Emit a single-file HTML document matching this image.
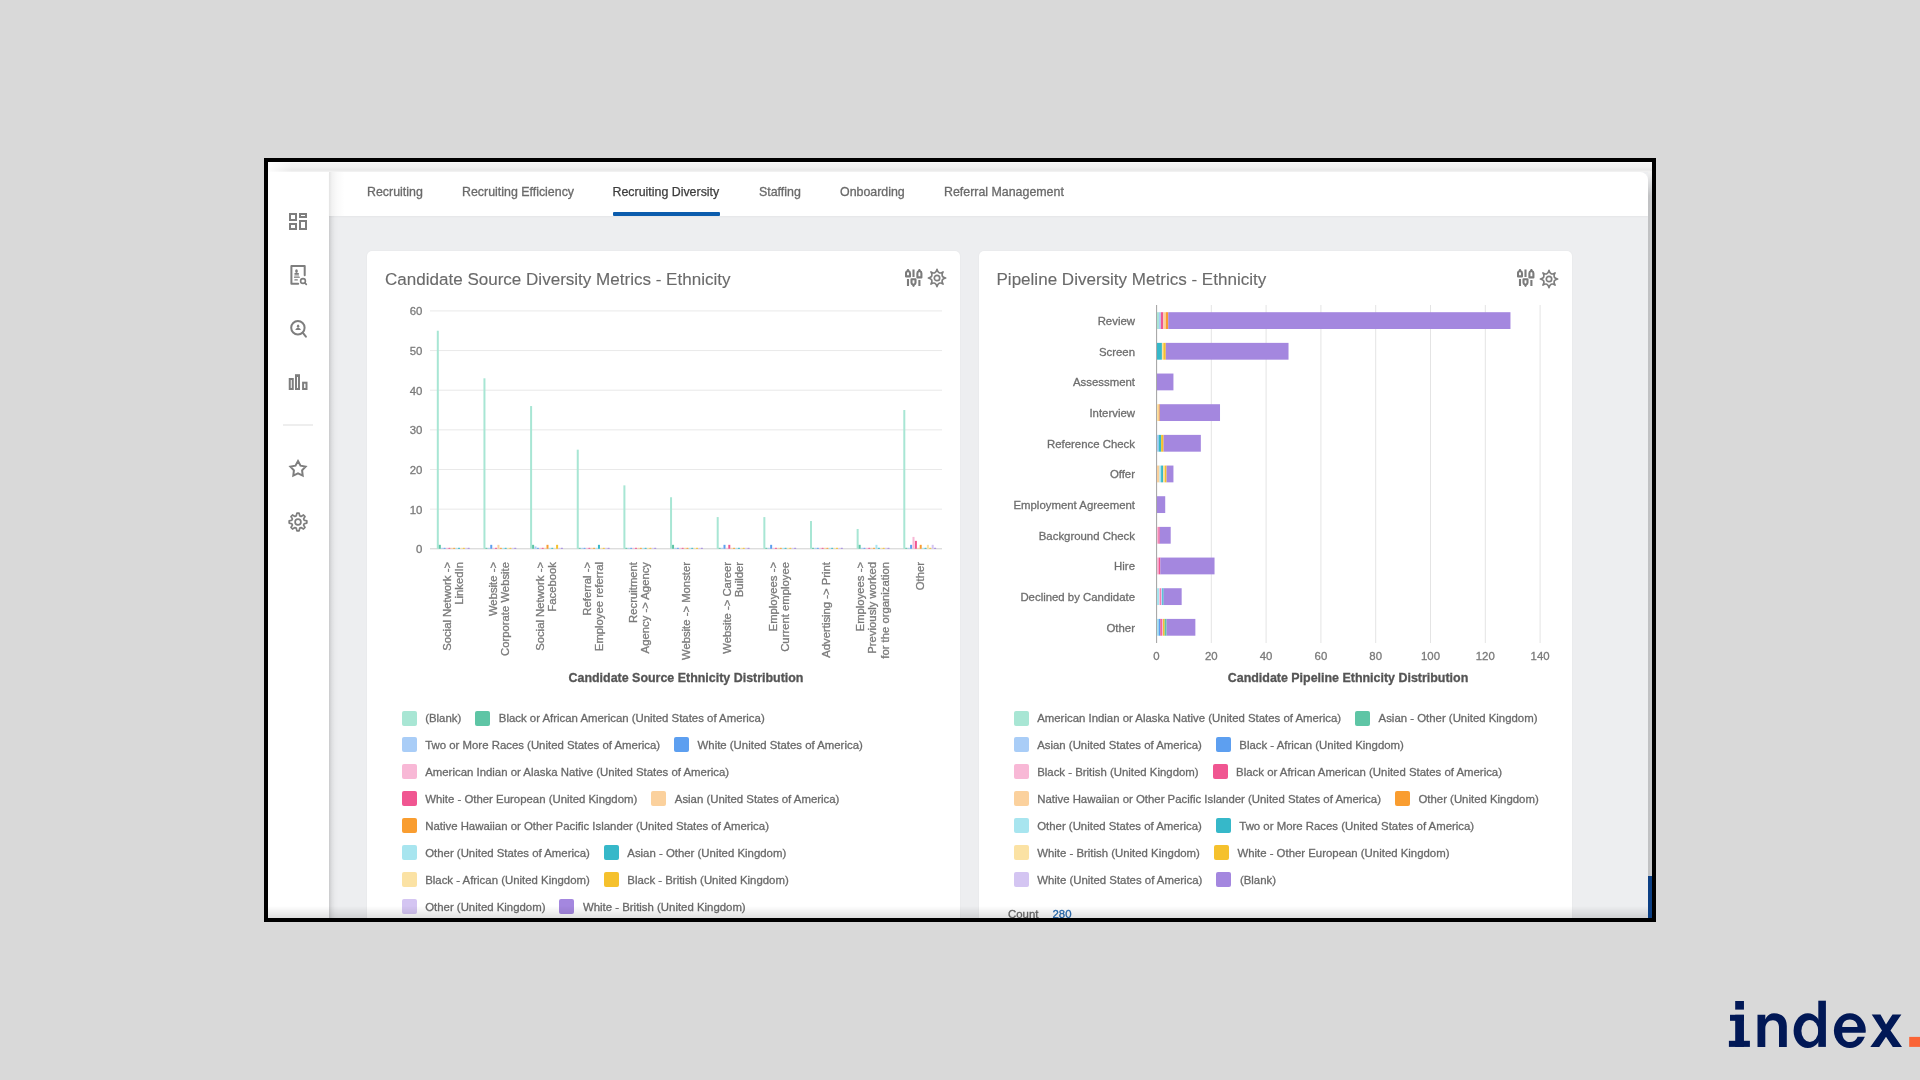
<!DOCTYPE html>
<html><head><meta charset="utf-8"><style>
html,body{margin:0;padding:0}
body{width:1920px;height:1080px;background:#d9d9d9;position:relative;overflow:hidden;font-family:"Liberation Sans", sans-serif}
#frame{position:absolute;left:264px;top:158px;width:1384px;height:756px;border:4px solid #000;background:#fff;background-clip:padding-box}
#clip{position:absolute;left:0;top:0;width:1384px;height:756px;overflow:hidden}
#pg{position:absolute;left:-268px;top:-162px;width:1920px;height:1080px;will-change:transform}
div{-webkit-text-stroke:0.3px currentColor}
.card{position:absolute;background:#fff;border-radius:5px;box-shadow:0 0 2px rgba(0,0,0,0.06)}
</style></head><body>
<div id="frame"><div id="clip"><div id="pg">
<!-- top strip -->
<div style="position:absolute;left:268px;top:162px;width:1384px;height:10px;background:linear-gradient(#ffffff 0px,#f3f3f3 1px,#f1f1f1 5px,#e8e8e8 8px,#f4f4f4 10px)"></div>
<div style="position:absolute;left:268px;top:162px;width:24px;height:12px;background:linear-gradient(90deg,rgba(255,255,255,0.9),rgba(255,255,255,0))"></div>
<!-- main grey area -->
<div style="position:absolute;left:329px;top:172px;width:1319px;height:746px;background:#edeef0"></div>
<!-- sidebar shadow on content -->
<div style="position:absolute;left:329px;top:172px;width:10px;height:746px;background:linear-gradient(90deg,rgba(0,0,0,0.15) 0px,rgba(0,0,0,0.06) 3px,rgba(0,0,0,0.015) 6px,rgba(0,0,0,0) 10px)"></div>
<!-- sidebar -->
<div style="position:absolute;left:268px;top:172px;width:61px;height:746px;background:#fff"></div>
<!-- tab bar -->
<div style="position:absolute;left:329px;top:172px;width:1319px;height:44px;background:#fff;border-top-right-radius:8px;box-shadow:0 1px 2px rgba(0,0,0,0.035)"></div>
<div style="position:absolute;left:329px;top:172px;width:16px;height:44px;background:linear-gradient(90deg,rgba(0,0,0,0.11) 0px,rgba(0,0,0,0.05) 3px,rgba(0,0,0,0.02) 8px,rgba(0,0,0,0) 16px)"></div>
<div style="position:absolute;left:367px;top:185px;line-height:14px;font-size:12.4px;white-space:nowrap;color:#6a6a6a;">Recruiting</div><div style="position:absolute;left:462px;top:185px;line-height:14px;font-size:12.4px;white-space:nowrap;color:#6a6a6a;">Recruiting Efficiency</div><div style="position:absolute;left:612.5px;top:185px;line-height:14px;font-size:12.4px;white-space:nowrap;color:#3d3d3d;-webkit-text-stroke:0.25px #3d3d3d;">Recruiting Diversity</div><div style="position:absolute;left:759px;top:185px;line-height:14px;font-size:12.4px;white-space:nowrap;color:#6a6a6a;">Staffing</div><div style="position:absolute;left:840px;top:185px;line-height:14px;font-size:12.4px;white-space:nowrap;color:#6a6a6a;">Onboarding</div><div style="position:absolute;left:944px;top:185px;line-height:14px;font-size:12.4px;white-space:nowrap;color:#6a6a6a;">Referral Management</div>
<div style="position:absolute;left:612.5px;top:211.5px;width:107.5px;height:4.5px;background:#0b5cad;border-radius:1px"></div>
<!-- scrollbar strip -->
<div style="position:absolute;left:1648px;top:172px;width:4px;height:746px;background:linear-gradient(#f2f2f2 0px,#d6d7d9 14px,#c9cacc 24px)"></div>
<div style="position:absolute;left:1648px;top:172px;width:2px;height:746px;background:linear-gradient(rgba(0,0,0,0) 14px,rgba(0,0,0,0.04) 24px)"></div>
<div style="position:absolute;left:1648px;top:876px;width:4px;height:42px;background:#0c3f84"></div>
<svg style="position:absolute;left:288px;top:212px" width="20" height="20" viewBox="0 0 20 20" fill="none" stroke="#7e7e7e" stroke-width="2">
<rect x="2" y="2" width="6" height="6"/><rect x="12" y="2" width="6" height="3"/><rect x="2" y="12" width="6" height="5"/><rect x="12" y="9" width="6" height="8"/></svg><svg style="position:absolute;left:284px;top:260px" width="28" height="30" viewBox="0 0 28 30" fill="none" stroke="#7e7e7e" stroke-width="2" stroke-linejoin="round" stroke-linecap="round">
<path d="M14.2 23.7 H7.4 V6.1 H20.7 V15.3"/>
<g fill="#7e7e7e" stroke="none"><ellipse cx="12.5" cy="11.1" rx="1.35" ry="1.9"/><rect x="10.3" y="13" width="4.7" height="1.8" rx="0.8"/><rect x="10.3" y="14.8" width="4.7" height="1.9" fill-opacity="0.45"/><rect x="10" y="16.7" width="5.8" height="1.1"/><rect x="10.3" y="19.2" width="3.6" height="1.3" rx="0.6"/></g>
<circle cx="19" cy="21" r="2.4" stroke-width="1.6"/><path d="M20.8 22.8 L22.3 24.3" stroke-width="1.7"/></svg><svg style="position:absolute;left:288px;top:318px" width="22" height="22" viewBox="0 0 22 22" fill="none" stroke="#7e7e7e" stroke-width="2" stroke-linecap="round">
<circle cx="9.9" cy="9.8" r="6.7"/><path d="M14.9 14.9 L17.9 18.6"/><ellipse cx="10.1" cy="8.2" rx="1.2" ry="1.6" fill="#7e7e7e" stroke="none"/><path d="M7.3 12.1 C7.5 10.6 8.6 10 10.1 10 C11.6 10 12.7 10.6 12.9 12.1 Z" fill="#7e7e7e" stroke="none"/></svg><svg style="position:absolute;left:285px;top:370px" width="26" height="24" viewBox="0 0 26 24" fill="none" stroke="#7e7e7e" stroke-width="2">
<rect x="4.75" y="9" width="3" height="10"/><rect x="11" y="5.2" width="3" height="13.8"/><rect x="18.1" y="12.7" width="3.4" height="6.3"/></svg><div style="position:absolute;left:283px;top:424px;width:30px;height:2px;background:#eeeeee"></div><svg style="position:absolute;left:287px;top:457px" width="22" height="22" viewBox="0 0 22 22" fill="none" stroke="#7e7e7e" stroke-width="2" stroke-linejoin="miter" stroke-miterlimit="2.5">
<path d="M11.00 4.10 L13.53 8.62 L18.61 9.63 L15.09 13.43 L15.70 18.57 L11.00 16.40 L6.30 18.57 L6.91 13.43 L3.39 9.63 L8.47 8.62 Z"/></svg><svg style="position:absolute;left:288px;top:512px" width="20" height="20" viewBox="0 0 20 20" fill="none" stroke="#7e7e7e" stroke-width="1.7" stroke-linejoin="round">
<path d="M8.24 3.85 L8.92 1.17 L11.08 1.17 L11.76 3.85 L13.10 4.40 L15.48 2.99 L17.01 4.52 L15.60 6.90 L16.15 8.24 L18.83 8.92 L18.83 11.08 L16.15 11.76 L15.60 13.10 L17.01 15.48 L15.48 17.01 L13.10 15.60 L11.76 16.15 L11.08 18.83 L8.92 18.83 L8.24 16.15 L6.90 15.60 L4.52 17.01 L2.99 15.48 L4.40 13.10 L3.85 11.76 L1.17 11.08 L1.17 8.92 L3.85 8.24 L4.40 6.90 L2.99 4.52 L4.52 2.99 L6.90 4.40 Z"/><circle cx="10" cy="10" r="2.9"/></svg>
<!-- cards -->
<div class="card" style="left:367px;top:251px;width:593px;height:700px"></div>
<div class="card" style="left:979px;top:251px;width:592.5px;height:700px"></div>
<div style="position:absolute;left:385px;top:270px;font-size:17.05px;line-height:20px;color:#6a6a6a;-webkit-text-stroke:0.12px #6a6a6a;white-space:nowrap">Candidate Source Diversity Metrics - Ethnicity</div>
<div style="position:absolute;left:996.5px;top:270px;font-size:17.05px;line-height:20px;color:#6a6a6a;-webkit-text-stroke:0.12px #6a6a6a;white-space:nowrap">Pipeline Diversity Metrics - Ethnicity</div>
<svg style="position:absolute;left:905px;top:269px" width="18" height="18" viewBox="0 0 18 18" fill="none" stroke="#7b7b7b" stroke-width="2.1" stroke-linejoin="round">
<path d="M3 10 V17 M8.5 0.5 V8 M14.4 11 V17"/>
<path d="M1 7.4 V4.2 Q1 2.6 2.4 2.3 L3 1 L3.6 2.3 Q5 2.6 5 4.2 V7.4 Z"/>
<path d="M6.5 10.3 H10.5 V13.8 Q10.5 15.2 9.1 15.6 L8.5 16.8 L7.9 15.6 Q6.5 15.2 6.5 13.8 Z"/>
<path d="M12.4 8.4 V4.2 Q12.4 2.6 13.8 2.3 L14.4 1 L15 2.3 Q16.4 2.6 16.4 4.2 V8.4 Z"/>
</svg><svg style="position:absolute;left:926.8px;top:268.4px" width="20" height="20" viewBox="0 0 20 20" fill="none" stroke="#7e7e7e" stroke-width="1.7" stroke-linejoin="round">
<path d="M10.00 1.40 Q11.26 6.95 16.08 3.92 Q13.05 8.74 18.60 10.00 Q13.05 11.26 16.08 16.08 Q11.26 13.05 10.00 18.60 Q8.74 13.05 3.92 16.08 Q6.95 11.26 1.40 10.00 Q6.95 8.74 3.92 3.92 Q8.74 6.95 10.00 1.40 Z"/><circle cx="10" cy="10" r="2.7"/></svg>
<svg style="position:absolute;left:1516.5px;top:269px" width="18" height="18" viewBox="0 0 18 18" fill="none" stroke="#7b7b7b" stroke-width="2.1" stroke-linejoin="round">
<path d="M3 10 V17 M8.5 0.5 V8 M14.4 11 V17"/>
<path d="M1 7.4 V4.2 Q1 2.6 2.4 2.3 L3 1 L3.6 2.3 Q5 2.6 5 4.2 V7.4 Z"/>
<path d="M6.5 10.3 H10.5 V13.8 Q10.5 15.2 9.1 15.6 L8.5 16.8 L7.9 15.6 Q6.5 15.2 6.5 13.8 Z"/>
<path d="M12.4 8.4 V4.2 Q12.4 2.6 13.8 2.3 L14.4 1 L15 2.3 Q16.4 2.6 16.4 4.2 V8.4 Z"/>
</svg><svg style="position:absolute;left:1538.5px;top:268.6px" width="20" height="20" viewBox="0 0 20 20" fill="none" stroke="#7e7e7e" stroke-width="1.7" stroke-linejoin="round">
<path d="M10.00 1.40 Q11.26 6.95 16.08 3.92 Q13.05 8.74 18.60 10.00 Q13.05 11.26 16.08 16.08 Q11.26 13.05 10.00 18.60 Q8.74 13.05 3.92 16.08 Q6.95 11.26 1.40 10.00 Q6.95 8.74 3.92 3.92 Q8.74 6.95 10.00 1.40 Z"/><circle cx="10" cy="10" r="2.7"/></svg>
<svg style="position:absolute;left:0;top:0" width="1920" height="1080"><rect x="430" y="548.30" width="512" height="1" fill="#cfcfcf"/><rect x="430" y="508.65" width="512" height="1" fill="#e9e9e9"/><rect x="430" y="469.00" width="512" height="1" fill="#e9e9e9"/><rect x="430" y="429.35" width="512" height="1" fill="#e9e9e9"/><rect x="430" y="389.70" width="512" height="1" fill="#e9e9e9"/><rect x="430" y="350.05" width="512" height="1" fill="#e9e9e9"/><rect x="430" y="310.40" width="512" height="1" fill="#e9e9e9"/><rect x="436.80" y="330.72" width="2" height="218.07" fill="#a8e6d4"/><rect x="438.80" y="544.83" width="2" height="3.96" fill="#5ec5a5"/><rect x="441.20" y="547.80" width="2" height="1.00" fill="#a9cdf7"/><rect x="443.60" y="547.80" width="2" height="1.00" fill="#5d9ff0"/><rect x="446.00" y="547.80" width="2" height="1.00" fill="#f8b8d6"/><rect x="448.40" y="547.80" width="2" height="1.00" fill="#f05691"/><rect x="450.80" y="547.80" width="2" height="1.00" fill="#fbd19d"/><rect x="453.20" y="547.80" width="2" height="1.00" fill="#f99d30"/><rect x="455.60" y="547.80" width="2" height="1.00" fill="#a8e5ef"/><rect x="458.00" y="547.80" width="2" height="1.00" fill="#36b8c9"/><rect x="460.40" y="547.80" width="2" height="1.00" fill="#fbe2a4"/><rect x="462.80" y="547.80" width="2" height="1.00" fill="#f5c12d"/><rect x="465.20" y="547.80" width="2" height="1.00" fill="#d4c5f2"/><rect x="467.60" y="547.80" width="2" height="1.00" fill="#a487df"/><rect x="483.45" y="378.30" width="2" height="170.50" fill="#a8e6d4"/><rect x="485.45" y="547.80" width="2" height="1.00" fill="#5ec5a5"/><rect x="487.85" y="547.80" width="2" height="1.00" fill="#a9cdf7"/><rect x="490.25" y="544.83" width="2" height="3.96" fill="#5d9ff0"/><rect x="492.65" y="547.80" width="2" height="1.00" fill="#f8b8d6"/><rect x="495.05" y="547.80" width="2" height="1.00" fill="#f05691"/><rect x="497.45" y="544.83" width="2" height="3.96" fill="#fbd19d"/><rect x="499.85" y="547.80" width="2" height="1.00" fill="#f99d30"/><rect x="502.25" y="547.80" width="2" height="1.00" fill="#a8e5ef"/><rect x="504.65" y="547.80" width="2" height="1.00" fill="#36b8c9"/><rect x="507.05" y="547.80" width="2" height="1.00" fill="#fbe2a4"/><rect x="509.45" y="547.80" width="2" height="1.00" fill="#f5c12d"/><rect x="511.85" y="547.80" width="2" height="1.00" fill="#d4c5f2"/><rect x="514.25" y="547.80" width="2" height="1.00" fill="#a487df"/><rect x="530.10" y="406.06" width="2" height="142.74" fill="#a8e6d4"/><rect x="532.10" y="544.83" width="2" height="3.96" fill="#5ec5a5"/><rect x="534.50" y="546.42" width="2" height="2.38" fill="#a9cdf7"/><rect x="536.90" y="547.80" width="2" height="1.00" fill="#5d9ff0"/><rect x="539.30" y="547.80" width="2" height="1.00" fill="#f8b8d6"/><rect x="541.70" y="547.80" width="2" height="1.00" fill="#f05691"/><rect x="544.10" y="547.80" width="2" height="1.00" fill="#fbd19d"/><rect x="546.50" y="544.83" width="2" height="3.96" fill="#f99d30"/><rect x="548.90" y="547.80" width="2" height="1.00" fill="#a8e5ef"/><rect x="551.30" y="547.80" width="2" height="1.00" fill="#36b8c9"/><rect x="553.70" y="547.80" width="2" height="1.00" fill="#fbe2a4"/><rect x="556.10" y="544.83" width="2" height="3.96" fill="#f5c12d"/><rect x="558.50" y="547.80" width="2" height="1.00" fill="#d4c5f2"/><rect x="560.90" y="547.80" width="2" height="1.00" fill="#a487df"/><rect x="576.75" y="449.67" width="2" height="99.12" fill="#a8e6d4"/><rect x="578.75" y="547.80" width="2" height="1.00" fill="#5ec5a5"/><rect x="581.15" y="547.80" width="2" height="1.00" fill="#a9cdf7"/><rect x="583.55" y="547.80" width="2" height="1.00" fill="#5d9ff0"/><rect x="585.95" y="547.80" width="2" height="1.00" fill="#f8b8d6"/><rect x="588.35" y="547.80" width="2" height="1.00" fill="#f05691"/><rect x="590.75" y="547.80" width="2" height="1.00" fill="#fbd19d"/><rect x="593.15" y="547.80" width="2" height="1.00" fill="#f99d30"/><rect x="595.55" y="547.80" width="2" height="1.00" fill="#a8e5ef"/><rect x="597.95" y="544.83" width="2" height="3.96" fill="#36b8c9"/><rect x="600.35" y="547.80" width="2" height="1.00" fill="#fbe2a4"/><rect x="602.75" y="547.80" width="2" height="1.00" fill="#f5c12d"/><rect x="605.15" y="547.80" width="2" height="1.00" fill="#d4c5f2"/><rect x="607.55" y="547.80" width="2" height="1.00" fill="#a487df"/><rect x="623.40" y="485.36" width="2" height="63.44" fill="#a8e6d4"/><rect x="625.40" y="547.80" width="2" height="1.00" fill="#5ec5a5"/><rect x="627.80" y="547.80" width="2" height="1.00" fill="#a9cdf7"/><rect x="630.20" y="547.80" width="2" height="1.00" fill="#5d9ff0"/><rect x="632.60" y="547.80" width="2" height="1.00" fill="#f8b8d6"/><rect x="635.00" y="547.80" width="2" height="1.00" fill="#f05691"/><rect x="637.40" y="547.80" width="2" height="1.00" fill="#fbd19d"/><rect x="639.80" y="547.80" width="2" height="1.00" fill="#f99d30"/><rect x="642.20" y="547.80" width="2" height="1.00" fill="#a8e5ef"/><rect x="644.60" y="547.80" width="2" height="1.00" fill="#36b8c9"/><rect x="647.00" y="547.80" width="2" height="1.00" fill="#fbe2a4"/><rect x="649.40" y="547.80" width="2" height="1.00" fill="#f5c12d"/><rect x="651.80" y="547.80" width="2" height="1.00" fill="#d4c5f2"/><rect x="654.20" y="547.80" width="2" height="1.00" fill="#a487df"/><rect x="670.05" y="497.25" width="2" height="51.55" fill="#a8e6d4"/><rect x="672.05" y="544.83" width="2" height="3.96" fill="#5ec5a5"/><rect x="674.45" y="547.80" width="2" height="1.00" fill="#a9cdf7"/><rect x="676.85" y="547.80" width="2" height="1.00" fill="#5d9ff0"/><rect x="679.25" y="547.80" width="2" height="1.00" fill="#f8b8d6"/><rect x="681.65" y="547.80" width="2" height="1.00" fill="#f05691"/><rect x="684.05" y="547.80" width="2" height="1.00" fill="#fbd19d"/><rect x="686.45" y="547.80" width="2" height="1.00" fill="#f99d30"/><rect x="688.85" y="547.80" width="2" height="1.00" fill="#a8e5ef"/><rect x="691.25" y="547.80" width="2" height="1.00" fill="#36b8c9"/><rect x="693.65" y="547.80" width="2" height="1.00" fill="#fbe2a4"/><rect x="696.05" y="547.80" width="2" height="1.00" fill="#f5c12d"/><rect x="698.45" y="547.80" width="2" height="1.00" fill="#d4c5f2"/><rect x="700.85" y="547.80" width="2" height="1.00" fill="#a487df"/><rect x="716.70" y="517.08" width="2" height="31.72" fill="#a8e6d4"/><rect x="718.70" y="547.80" width="2" height="1.00" fill="#5ec5a5"/><rect x="721.10" y="547.80" width="2" height="1.00" fill="#a9cdf7"/><rect x="723.50" y="544.83" width="2" height="3.96" fill="#5d9ff0"/><rect x="725.90" y="547.80" width="2" height="1.00" fill="#f8b8d6"/><rect x="728.30" y="544.83" width="2" height="3.96" fill="#f05691"/><rect x="730.70" y="547.80" width="2" height="1.00" fill="#fbd19d"/><rect x="733.10" y="547.80" width="2" height="1.00" fill="#f99d30"/><rect x="735.50" y="547.80" width="2" height="1.00" fill="#a8e5ef"/><rect x="737.90" y="547.80" width="2" height="1.00" fill="#36b8c9"/><rect x="740.30" y="547.80" width="2" height="1.00" fill="#fbe2a4"/><rect x="742.70" y="547.80" width="2" height="1.00" fill="#f5c12d"/><rect x="745.10" y="547.80" width="2" height="1.00" fill="#d4c5f2"/><rect x="747.50" y="547.80" width="2" height="1.00" fill="#a487df"/><rect x="763.35" y="517.08" width="2" height="31.72" fill="#a8e6d4"/><rect x="765.35" y="547.80" width="2" height="1.00" fill="#5ec5a5"/><rect x="767.75" y="547.80" width="2" height="1.00" fill="#a9cdf7"/><rect x="770.15" y="544.83" width="2" height="3.96" fill="#5d9ff0"/><rect x="772.55" y="547.80" width="2" height="1.00" fill="#f8b8d6"/><rect x="774.95" y="547.80" width="2" height="1.00" fill="#f05691"/><rect x="777.35" y="547.80" width="2" height="1.00" fill="#fbd19d"/><rect x="779.75" y="547.80" width="2" height="1.00" fill="#f99d30"/><rect x="782.15" y="547.80" width="2" height="1.00" fill="#a8e5ef"/><rect x="784.55" y="547.80" width="2" height="1.00" fill="#36b8c9"/><rect x="786.95" y="547.80" width="2" height="1.00" fill="#fbe2a4"/><rect x="789.35" y="547.80" width="2" height="1.00" fill="#f5c12d"/><rect x="791.75" y="547.80" width="2" height="1.00" fill="#d4c5f2"/><rect x="794.15" y="547.80" width="2" height="1.00" fill="#a487df"/><rect x="810.00" y="521.04" width="2" height="27.75" fill="#a8e6d4"/><rect x="812.00" y="547.80" width="2" height="1.00" fill="#5ec5a5"/><rect x="814.40" y="547.80" width="2" height="1.00" fill="#a9cdf7"/><rect x="816.80" y="547.80" width="2" height="1.00" fill="#5d9ff0"/><rect x="819.20" y="547.80" width="2" height="1.00" fill="#f8b8d6"/><rect x="821.60" y="547.80" width="2" height="1.00" fill="#f05691"/><rect x="824.00" y="547.80" width="2" height="1.00" fill="#fbd19d"/><rect x="826.40" y="547.80" width="2" height="1.00" fill="#f99d30"/><rect x="828.80" y="547.80" width="2" height="1.00" fill="#a8e5ef"/><rect x="831.20" y="547.80" width="2" height="1.00" fill="#36b8c9"/><rect x="833.60" y="547.80" width="2" height="1.00" fill="#fbe2a4"/><rect x="836.00" y="547.80" width="2" height="1.00" fill="#f5c12d"/><rect x="838.40" y="547.80" width="2" height="1.00" fill="#d4c5f2"/><rect x="840.80" y="547.80" width="2" height="1.00" fill="#a487df"/><rect x="856.65" y="528.97" width="2" height="19.82" fill="#a8e6d4"/><rect x="858.65" y="544.83" width="2" height="3.96" fill="#5ec5a5"/><rect x="861.05" y="547.80" width="2" height="1.00" fill="#a9cdf7"/><rect x="863.45" y="547.80" width="2" height="1.00" fill="#5d9ff0"/><rect x="865.85" y="547.80" width="2" height="1.00" fill="#f8b8d6"/><rect x="868.25" y="547.80" width="2" height="1.00" fill="#f05691"/><rect x="870.65" y="547.80" width="2" height="1.00" fill="#fbd19d"/><rect x="873.05" y="547.80" width="2" height="1.00" fill="#f99d30"/><rect x="875.45" y="544.83" width="2" height="3.96" fill="#a8e5ef"/><rect x="877.85" y="547.80" width="2" height="1.00" fill="#36b8c9"/><rect x="880.25" y="547.80" width="2" height="1.00" fill="#fbe2a4"/><rect x="882.65" y="547.80" width="2" height="1.00" fill="#f5c12d"/><rect x="885.05" y="547.80" width="2" height="1.00" fill="#d4c5f2"/><rect x="887.45" y="547.80" width="2" height="1.00" fill="#a487df"/><rect x="903.30" y="410.02" width="2" height="138.78" fill="#a8e6d4"/><rect x="905.30" y="547.80" width="2" height="1.00" fill="#5ec5a5"/><rect x="907.70" y="547.80" width="2" height="1.00" fill="#a9cdf7"/><rect x="910.10" y="544.83" width="2" height="3.96" fill="#5d9ff0"/><rect x="912.50" y="536.90" width="2" height="11.89" fill="#f8b8d6"/><rect x="914.90" y="540.87" width="2" height="7.93" fill="#f05691"/><rect x="917.30" y="547.80" width="2" height="1.00" fill="#fbd19d"/><rect x="919.70" y="544.83" width="2" height="3.96" fill="#f99d30"/><rect x="922.10" y="547.80" width="2" height="1.00" fill="#a8e5ef"/><rect x="924.50" y="547.80" width="2" height="1.00" fill="#36b8c9"/><rect x="926.90" y="544.83" width="2" height="3.96" fill="#fbe2a4"/><rect x="929.30" y="547.80" width="2" height="1.00" fill="#f5c12d"/><rect x="931.70" y="544.83" width="2" height="3.96" fill="#d4c5f2"/><rect x="934.10" y="547.80" width="2" height="1.00" fill="#a487df"/></svg><div style="position:absolute;left:391.3px;width:31px;top:542.2px;height:14px;line-height:14px;text-align:right;font-size:11.4px;color:#7a7a7a">0</div><div style="position:absolute;left:391.3px;width:31px;top:502.5px;height:14px;line-height:14px;text-align:right;font-size:11.4px;color:#7a7a7a">10</div><div style="position:absolute;left:391.3px;width:31px;top:462.9px;height:14px;line-height:14px;text-align:right;font-size:11.4px;color:#7a7a7a">20</div><div style="position:absolute;left:391.3px;width:31px;top:423.2px;height:14px;line-height:14px;text-align:right;font-size:11.4px;color:#7a7a7a">30</div><div style="position:absolute;left:391.3px;width:31px;top:383.6px;height:14px;line-height:14px;text-align:right;font-size:11.4px;color:#7a7a7a">40</div><div style="position:absolute;left:391.3px;width:31px;top:343.9px;height:14px;line-height:14px;text-align:right;font-size:11.4px;color:#7a7a7a">50</div><div style="position:absolute;left:391.3px;width:31px;top:304.3px;height:14px;line-height:14px;text-align:right;font-size:11.4px;color:#7a7a7a">60</div><div style="position:absolute;left:440.80px;top:722.00px;width:160px;height:24.8px;transform-origin:0 0;transform:rotate(-90deg);text-align:right;font-size:11.3px;line-height:12.4px;color:#7a7a7a;white-space:nowrap">Social Network -&gt;<br>LinkedIn</div><div style="position:absolute;left:487.45px;top:722.00px;width:160px;height:24.8px;transform-origin:0 0;transform:rotate(-90deg);text-align:right;font-size:11.3px;line-height:12.4px;color:#7a7a7a;white-space:nowrap">Website -&gt;<br>Corporate Website</div><div style="position:absolute;left:534.10px;top:722.00px;width:160px;height:24.8px;transform-origin:0 0;transform:rotate(-90deg);text-align:right;font-size:11.3px;line-height:12.4px;color:#7a7a7a;white-space:nowrap">Social Network -&gt;<br>Facebook</div><div style="position:absolute;left:580.75px;top:722.00px;width:160px;height:24.8px;transform-origin:0 0;transform:rotate(-90deg);text-align:right;font-size:11.3px;line-height:12.4px;color:#7a7a7a;white-space:nowrap">Referral -&gt;<br>Employee referral</div><div style="position:absolute;left:627.40px;top:722.00px;width:160px;height:24.8px;transform-origin:0 0;transform:rotate(-90deg);text-align:right;font-size:11.3px;line-height:12.4px;color:#7a7a7a;white-space:nowrap">Recruitment<br>Agency -&gt; Agency</div><div style="position:absolute;left:680.25px;top:722.00px;width:160px;height:12.4px;transform-origin:0 0;transform:rotate(-90deg);text-align:right;font-size:11.3px;line-height:12.4px;color:#7a7a7a;white-space:nowrap">Website -&gt; Monster</div><div style="position:absolute;left:720.70px;top:722.00px;width:160px;height:24.8px;transform-origin:0 0;transform:rotate(-90deg);text-align:right;font-size:11.3px;line-height:12.4px;color:#7a7a7a;white-space:nowrap">Website -&gt; Career<br>Builder</div><div style="position:absolute;left:767.35px;top:722.00px;width:160px;height:24.8px;transform-origin:0 0;transform:rotate(-90deg);text-align:right;font-size:11.3px;line-height:12.4px;color:#7a7a7a;white-space:nowrap">Employees -&gt;<br>Current employee</div><div style="position:absolute;left:820.20px;top:722.00px;width:160px;height:12.4px;transform-origin:0 0;transform:rotate(-90deg);text-align:right;font-size:11.3px;line-height:12.4px;color:#7a7a7a;white-space:nowrap">Advertising -&gt; Print</div><div style="position:absolute;left:854.45px;top:722.00px;width:160px;height:37.2px;transform-origin:0 0;transform:rotate(-90deg);text-align:right;font-size:11.3px;line-height:12.4px;color:#7a7a7a;white-space:nowrap">Employees -&gt;<br>Previously worked<br>for the organization</div><div style="position:absolute;left:913.50px;top:722.00px;width:160px;height:12.4px;transform-origin:0 0;transform:rotate(-90deg);text-align:right;font-size:11.3px;line-height:12.4px;color:#7a7a7a;white-space:nowrap">Other</div><div style="position:absolute;left:480px;width:412px;top:670px;text-align:center;font-size:12.45px;font-weight:bold;color:#555;line-height:16px">Candidate Source Ethnicity Distribution</div>
<svg style="position:absolute;left:0;top:0" width="1920" height="1080"><rect x="1210.80" y="305" width="1" height="338" fill="#e4e4e4"/><rect x="1265.60" y="305" width="1" height="338" fill="#e4e4e4"/><rect x="1320.40" y="305" width="1" height="338" fill="#e4e4e4"/><rect x="1375.20" y="305" width="1" height="338" fill="#e4e4e4"/><rect x="1430.00" y="305" width="1" height="338" fill="#e4e4e4"/><rect x="1484.80" y="305" width="1" height="338" fill="#e4e4e4"/><rect x="1539.60" y="305" width="1" height="338" fill="#e4e4e4"/><rect x="1156.10" y="305" width="1" height="338" fill="#a0a0a0"/><rect x="1157.00" y="312.20" width="1.92" height="16.8" fill="#a8e6d4"/><rect x="1158.92" y="312.20" width="1.92" height="16.8" fill="#a9cdf7"/><rect x="1160.84" y="312.20" width="2.47" height="16.8" fill="#f05691"/><rect x="1163.30" y="312.20" width="2.47" height="16.8" fill="#fbd19d"/><rect x="1165.77" y="312.20" width="2.47" height="16.8" fill="#f99d30"/><rect x="1168.23" y="312.20" width="342.23" height="16.8" fill="#a487df"/><rect x="1157.00" y="342.87" width="4.93" height="16.8" fill="#36b8c9"/><rect x="1161.93" y="342.87" width="1.37" height="16.8" fill="#fbe2a4"/><rect x="1163.30" y="342.87" width="2.47" height="16.8" fill="#f5c12d"/><rect x="1165.77" y="342.87" width="122.75" height="16.8" fill="#a487df"/><rect x="1157.00" y="373.54" width="16.44" height="16.8" fill="#a487df"/><rect x="1157.00" y="404.21" width="1.64" height="16.8" fill="#fbe2a4"/><rect x="1158.64" y="404.21" width="1.10" height="16.8" fill="#f99d30"/><rect x="1159.74" y="404.21" width="60.28" height="16.8" fill="#a487df"/><rect x="1157.00" y="434.88" width="1.64" height="16.8" fill="#a9cdf7"/><rect x="1158.64" y="434.88" width="2.47" height="16.8" fill="#36b8c9"/><rect x="1161.11" y="434.88" width="2.47" height="16.8" fill="#f5c12d"/><rect x="1163.58" y="434.88" width="37.26" height="16.8" fill="#a487df"/><rect x="1157.00" y="465.55" width="2.47" height="16.8" fill="#fbd19d"/><rect x="1159.47" y="465.55" width="1.64" height="16.8" fill="#a8e5ef"/><rect x="1161.11" y="465.55" width="1.92" height="16.8" fill="#36b8c9"/><rect x="1163.03" y="465.55" width="1.64" height="16.8" fill="#fbe2a4"/><rect x="1164.67" y="465.55" width="1.92" height="16.8" fill="#f5c12d"/><rect x="1166.59" y="465.55" width="6.85" height="16.8" fill="#a487df"/><rect x="1157.00" y="496.22" width="8.22" height="16.8" fill="#a487df"/><rect x="1157.00" y="526.89" width="1.37" height="16.8" fill="#f8b8d6"/><rect x="1158.37" y="526.89" width="1.37" height="16.8" fill="#f05691"/><rect x="1159.74" y="526.89" width="10.96" height="16.8" fill="#a487df"/><rect x="1157.00" y="557.56" width="1.64" height="16.8" fill="#f8b8d6"/><rect x="1158.64" y="557.56" width="1.64" height="16.8" fill="#f05691"/><rect x="1160.29" y="557.56" width="54.25" height="16.8" fill="#a487df"/><rect x="1157.00" y="588.23" width="2.19" height="16.8" fill="#a8e5ef"/><rect x="1159.19" y="588.23" width="1.10" height="16.8" fill="#f8b8d6"/><rect x="1160.29" y="588.23" width="0.82" height="16.8" fill="#f05691"/><rect x="1161.11" y="588.23" width="1.10" height="16.8" fill="#d4c5f2"/><rect x="1162.21" y="588.23" width="1.37" height="16.8" fill="#36b8c9"/><rect x="1163.58" y="588.23" width="18.08" height="16.8" fill="#a487df"/><rect x="1157.00" y="618.90" width="1.64" height="16.8" fill="#a8e5ef"/><rect x="1158.64" y="618.90" width="1.64" height="16.8" fill="#5d9ff0"/><rect x="1160.29" y="618.90" width="1.64" height="16.8" fill="#f05691"/><rect x="1161.93" y="618.90" width="1.10" height="16.8" fill="#f8b8d6"/><rect x="1163.03" y="618.90" width="1.64" height="16.8" fill="#f5c12d"/><rect x="1164.67" y="618.90" width="1.92" height="16.8" fill="#5ec5a5"/><rect x="1166.59" y="618.90" width="28.77" height="16.8" fill="#a487df"/></svg><div style="position:absolute;left:990px;width:145px;top:313.9px;height:15px;line-height:15px;text-align:right;font-size:11.4px;color:#6e6e6e;white-space:nowrap">Review</div><div style="position:absolute;left:990px;width:145px;top:344.6px;height:15px;line-height:15px;text-align:right;font-size:11.4px;color:#6e6e6e;white-space:nowrap">Screen</div><div style="position:absolute;left:990px;width:145px;top:375.2px;height:15px;line-height:15px;text-align:right;font-size:11.4px;color:#6e6e6e;white-space:nowrap">Assessment</div><div style="position:absolute;left:990px;width:145px;top:405.9px;height:15px;line-height:15px;text-align:right;font-size:11.4px;color:#6e6e6e;white-space:nowrap">Interview</div><div style="position:absolute;left:990px;width:145px;top:436.6px;height:15px;line-height:15px;text-align:right;font-size:11.4px;color:#6e6e6e;white-space:nowrap">Reference Check</div><div style="position:absolute;left:990px;width:145px;top:467.3px;height:15px;line-height:15px;text-align:right;font-size:11.4px;color:#6e6e6e;white-space:nowrap">Offer</div><div style="position:absolute;left:990px;width:145px;top:497.9px;height:15px;line-height:15px;text-align:right;font-size:11.4px;color:#6e6e6e;white-space:nowrap">Employment Agreement</div><div style="position:absolute;left:990px;width:145px;top:528.6px;height:15px;line-height:15px;text-align:right;font-size:11.4px;color:#6e6e6e;white-space:nowrap">Background Check</div><div style="position:absolute;left:990px;width:145px;top:559.3px;height:15px;line-height:15px;text-align:right;font-size:11.4px;color:#6e6e6e;white-space:nowrap">Hire</div><div style="position:absolute;left:990px;width:145px;top:589.9px;height:15px;line-height:15px;text-align:right;font-size:11.4px;color:#6e6e6e;white-space:nowrap">Declined by Candidate</div><div style="position:absolute;left:990px;width:145px;top:620.6px;height:15px;line-height:15px;text-align:right;font-size:11.4px;color:#6e6e6e;white-space:nowrap">Other</div><div style="position:absolute;left:1136.5px;width:40px;top:649px;height:14px;line-height:14px;text-align:center;font-size:11.4px;color:#7a7a7a">0</div><div style="position:absolute;left:1191.3px;width:40px;top:649px;height:14px;line-height:14px;text-align:center;font-size:11.4px;color:#7a7a7a">20</div><div style="position:absolute;left:1246.1px;width:40px;top:649px;height:14px;line-height:14px;text-align:center;font-size:11.4px;color:#7a7a7a">40</div><div style="position:absolute;left:1300.9px;width:40px;top:649px;height:14px;line-height:14px;text-align:center;font-size:11.4px;color:#7a7a7a">60</div><div style="position:absolute;left:1355.7px;width:40px;top:649px;height:14px;line-height:14px;text-align:center;font-size:11.4px;color:#7a7a7a">80</div><div style="position:absolute;left:1410.5px;width:40px;top:649px;height:14px;line-height:14px;text-align:center;font-size:11.4px;color:#7a7a7a">100</div><div style="position:absolute;left:1465.3px;width:40px;top:649px;height:14px;line-height:14px;text-align:center;font-size:11.4px;color:#7a7a7a">120</div><div style="position:absolute;left:1520.1px;width:40px;top:649px;height:14px;line-height:14px;text-align:center;font-size:11.4px;color:#7a7a7a">140</div><div style="position:absolute;left:1142px;width:412px;top:670px;text-align:center;font-size:12.45px;font-weight:bold;color:#555;line-height:16px">Candidate Pipeline Ethnicity Distribution</div>
<div style="position:absolute;left:401.7px;top:710.5px;height:15px;display:flex;align-items:center;white-space:nowrap;font-size:11.4px;color:#6a6a6a"><span style="display:inline-block;width:15px;height:15px;border-radius:2px;background:#a8e6d4"></span><span style="margin-left:8.5px;line-height:15px;position:relative;top:0.8px">(Blank)</span><span style="margin-left:14px;display:inline-block;width:15px;height:15px;border-radius:2px;background:#5ec5a5"></span><span style="margin-left:8.5px;line-height:15px;position:relative;top:0.8px">Black or African American (United States of America)</span></div><div style="position:absolute;left:401.7px;top:737.4px;height:15px;display:flex;align-items:center;white-space:nowrap;font-size:11.4px;color:#6a6a6a"><span style="display:inline-block;width:15px;height:15px;border-radius:2px;background:#a9cdf7"></span><span style="margin-left:8.5px;line-height:15px;position:relative;top:0.8px">Two or More Races (United States of America)</span><span style="margin-left:14px;display:inline-block;width:15px;height:15px;border-radius:2px;background:#5d9ff0"></span><span style="margin-left:8.5px;line-height:15px;position:relative;top:0.8px">White (United States of America)</span></div><div style="position:absolute;left:401.7px;top:764.3px;height:15px;display:flex;align-items:center;white-space:nowrap;font-size:11.4px;color:#6a6a6a"><span style="display:inline-block;width:15px;height:15px;border-radius:2px;background:#f8b8d6"></span><span style="margin-left:8.5px;line-height:15px;position:relative;top:0.8px">American Indian or Alaska Native (United States of America)</span></div><div style="position:absolute;left:401.7px;top:791.2px;height:15px;display:flex;align-items:center;white-space:nowrap;font-size:11.4px;color:#6a6a6a"><span style="display:inline-block;width:15px;height:15px;border-radius:2px;background:#f05691"></span><span style="margin-left:8.5px;line-height:15px;position:relative;top:0.8px">White - Other European (United Kingdom)</span><span style="margin-left:14px;display:inline-block;width:15px;height:15px;border-radius:2px;background:#fbd19d"></span><span style="margin-left:8.5px;line-height:15px;position:relative;top:0.8px">Asian (United States of America)</span></div><div style="position:absolute;left:401.7px;top:818.1px;height:15px;display:flex;align-items:center;white-space:nowrap;font-size:11.4px;color:#6a6a6a"><span style="display:inline-block;width:15px;height:15px;border-radius:2px;background:#f99d30"></span><span style="margin-left:8.5px;line-height:15px;position:relative;top:0.8px">Native Hawaiian or Other Pacific Islander (United States of America)</span></div><div style="position:absolute;left:401.7px;top:845.0px;height:15px;display:flex;align-items:center;white-space:nowrap;font-size:11.4px;color:#6a6a6a"><span style="display:inline-block;width:15px;height:15px;border-radius:2px;background:#a8e5ef"></span><span style="margin-left:8.5px;line-height:15px;position:relative;top:0.8px">Other (United States of America)</span><span style="margin-left:14px;display:inline-block;width:15px;height:15px;border-radius:2px;background:#36b8c9"></span><span style="margin-left:8.5px;line-height:15px;position:relative;top:0.8px">Asian - Other (United Kingdom)</span></div><div style="position:absolute;left:401.7px;top:871.9px;height:15px;display:flex;align-items:center;white-space:nowrap;font-size:11.4px;color:#6a6a6a"><span style="display:inline-block;width:15px;height:15px;border-radius:2px;background:#fbe2a4"></span><span style="margin-left:8.5px;line-height:15px;position:relative;top:0.8px">Black - African (United Kingdom)</span><span style="margin-left:14px;display:inline-block;width:15px;height:15px;border-radius:2px;background:#f5c12d"></span><span style="margin-left:8.5px;line-height:15px;position:relative;top:0.8px">Black - British (United Kingdom)</span></div><div style="position:absolute;left:401.7px;top:898.8px;height:15px;display:flex;align-items:center;white-space:nowrap;font-size:11.4px;color:#6a6a6a"><span style="display:inline-block;width:15px;height:15px;border-radius:2px;background:#d4c5f2"></span><span style="margin-left:8.5px;line-height:15px;position:relative;top:0.8px">Other (United Kingdom)</span><span style="margin-left:14px;display:inline-block;width:15px;height:15px;border-radius:2px;background:#a487df"></span><span style="margin-left:8.5px;line-height:15px;position:relative;top:0.8px">White - British (United Kingdom)</span></div>
<div style="position:absolute;left:1013.7px;top:710.5px;height:15px;display:flex;align-items:center;white-space:nowrap;font-size:11.4px;color:#6a6a6a"><span style="display:inline-block;width:15px;height:15px;border-radius:2px;background:#a8e6d4"></span><span style="margin-left:8.5px;line-height:15px;position:relative;top:0.8px">American Indian or Alaska Native (United States of America)</span><span style="margin-left:14px;display:inline-block;width:15px;height:15px;border-radius:2px;background:#5ec5a5"></span><span style="margin-left:8.5px;line-height:15px;position:relative;top:0.8px">Asian - Other (United Kingdom)</span></div><div style="position:absolute;left:1013.7px;top:737.4px;height:15px;display:flex;align-items:center;white-space:nowrap;font-size:11.4px;color:#6a6a6a"><span style="display:inline-block;width:15px;height:15px;border-radius:2px;background:#a9cdf7"></span><span style="margin-left:8.5px;line-height:15px;position:relative;top:0.8px">Asian (United States of America)</span><span style="margin-left:14px;display:inline-block;width:15px;height:15px;border-radius:2px;background:#5d9ff0"></span><span style="margin-left:8.5px;line-height:15px;position:relative;top:0.8px">Black - African (United Kingdom)</span></div><div style="position:absolute;left:1013.7px;top:764.3px;height:15px;display:flex;align-items:center;white-space:nowrap;font-size:11.4px;color:#6a6a6a"><span style="display:inline-block;width:15px;height:15px;border-radius:2px;background:#f8b8d6"></span><span style="margin-left:8.5px;line-height:15px;position:relative;top:0.8px">Black - British (United Kingdom)</span><span style="margin-left:14px;display:inline-block;width:15px;height:15px;border-radius:2px;background:#f05691"></span><span style="margin-left:8.5px;line-height:15px;position:relative;top:0.8px">Black or African American (United States of America)</span></div><div style="position:absolute;left:1013.7px;top:791.2px;height:15px;display:flex;align-items:center;white-space:nowrap;font-size:11.4px;color:#6a6a6a"><span style="display:inline-block;width:15px;height:15px;border-radius:2px;background:#fbd19d"></span><span style="margin-left:8.5px;line-height:15px;position:relative;top:0.8px">Native Hawaiian or Other Pacific Islander (United States of America)</span><span style="margin-left:14px;display:inline-block;width:15px;height:15px;border-radius:2px;background:#f99d30"></span><span style="margin-left:8.5px;line-height:15px;position:relative;top:0.8px">Other (United Kingdom)</span></div><div style="position:absolute;left:1013.7px;top:818.1px;height:15px;display:flex;align-items:center;white-space:nowrap;font-size:11.4px;color:#6a6a6a"><span style="display:inline-block;width:15px;height:15px;border-radius:2px;background:#a8e5ef"></span><span style="margin-left:8.5px;line-height:15px;position:relative;top:0.8px">Other (United States of America)</span><span style="margin-left:14px;display:inline-block;width:15px;height:15px;border-radius:2px;background:#36b8c9"></span><span style="margin-left:8.5px;line-height:15px;position:relative;top:0.8px">Two or More Races (United States of America)</span></div><div style="position:absolute;left:1013.7px;top:845.0px;height:15px;display:flex;align-items:center;white-space:nowrap;font-size:11.4px;color:#6a6a6a"><span style="display:inline-block;width:15px;height:15px;border-radius:2px;background:#fbe2a4"></span><span style="margin-left:8.5px;line-height:15px;position:relative;top:0.8px">White - British (United Kingdom)</span><span style="margin-left:14px;display:inline-block;width:15px;height:15px;border-radius:2px;background:#f5c12d"></span><span style="margin-left:8.5px;line-height:15px;position:relative;top:0.8px">White - Other European (United Kingdom)</span></div><div style="position:absolute;left:1013.7px;top:871.9px;height:15px;display:flex;align-items:center;white-space:nowrap;font-size:11.4px;color:#6a6a6a"><span style="display:inline-block;width:15px;height:15px;border-radius:2px;background:#d4c5f2"></span><span style="margin-left:8.5px;line-height:15px;position:relative;top:0.8px">White (United States of America)</span><span style="margin-left:14px;display:inline-block;width:15px;height:15px;border-radius:2px;background:#a487df"></span><span style="margin-left:8.5px;line-height:15px;position:relative;top:0.8px">(Blank)</span></div>
<div style="position:absolute;left:1008px;top:907px;font-size:11.4px;line-height:14px;color:#6a6a6a">Count</div>
<div style="position:absolute;left:1052.5px;top:907px;font-size:11.4px;line-height:14px;color:#2a6db3">280</div>
<!-- bottom shadow -->
<div style="position:absolute;left:268px;top:906px;width:1380px;height:12px;background:linear-gradient(rgba(0,0,0,0),rgba(0,0,0,0.12))"></div>
</div></div></div>
<!-- logo -->
<svg style="position:absolute;left:1720px;top:995px" width="200" height="60" viewBox="0 0 200 60">
<g fill="#011856">
<rect x="15.2" y="6" width="8.75" height="8.6"/>
<rect x="10" y="19.8" width="13.95" height="6"/>
<rect x="15.2" y="19.8" width="8.75" height="32.1"/>
<rect x="8.9" y="45.8" width="21" height="6.1"/>
<path d="M37.5 19.8 H45.3 V24.5 C47 20.5 50 18.3 54 18.3 C61.5 18.3 66.8 22.5 66.8 31 V51.9 H59 V33 C59 28 57 25.2 53 25.2 C48.5 25.2 45.3 28.5 45.3 33.5 V51.9 H37.5 Z"/>
<ellipse cx="87.8" cy="35.65" rx="14.2" ry="17.35"/>
<ellipse cx="129.85" cy="35.65" rx="15.95" ry="17.35"/>
<path d="M151.7 19.4 H160.5 L166 29.4 L172.5 19.4 H181.4 L170.5 35.5 L182 51.9 H172.8 L166 41.7 L159.2 51.9 H150.3 L162 35.5 Z"/>
</g>
<g fill="#d9d9d9">
<ellipse cx="89.85" cy="35.95" rx="8.45" ry="11.05"/>
<path d="M122.2 32 C122.2 27.5 125.5 24.4 129.85 24.4 C134.2 24.4 137.5 27.5 137.5 32 Z"/>
<path d="M122.2 37.8 H147 V41.7 H137.6 C136.3 45 133.5 47.1 129.85 47.1 C125.5 47.1 122.2 43.5 122.2 37.8 Z"/>
</g>
<rect x="98.3" y="5.7" width="7.6" height="46.2" fill="#011856"/>
<rect x="189.2" y="41.9" width="11" height="10" fill="#fa6436"/>
</svg>
</body></html>
